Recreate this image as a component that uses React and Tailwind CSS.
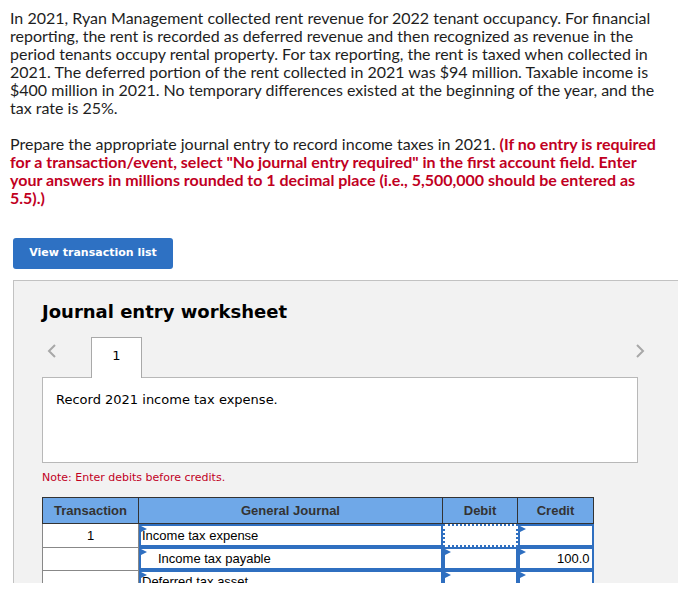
import React from "react";

const verdana = { fontFamily: '"DejaVu Sans", Verdana, sans-serif' };

function Arrow() {
  return (
    <span className="absolute left-0 top-0 w-0 h-0 border-t-[3px] border-b-[3px] border-l-[6px] border-t-transparent border-b-transparent border-l-[#2f6fc0]" />
  );
}

function InputCell({ children, align = "left", indent = false, dotted = false }) {
  return (
    <td className="p-0 align-top">
      <div
        className={`relative h-[23px] bg-white ${
          dotted ? "border-2 border-dotted border-[#2f6fc0]" : "border-2 border-[#2f6fc0]"
        } ${align === "right" ? "text-right pr-[2px]" : ""} ${indent ? "pl-[17px]" : "pl-[1px]"} text-[13px] leading-[20px] text-black`}
      >
        {!dotted && <Arrow />}
        {children}
      </div>
    </td>
  );
}

export default function App() {
  const rows = [
    { tx: "1", account: "Income tax expense", indent: false, debit: "", credit: "", dotted: true },
    { tx: "", account: "Income tax payable", indent: true, debit: "", credit: "100.0" },
    { tx: "", account: "Deferred tax asset", indent: false, debit: "", credit: "" },
  ];

  return (
    <div className="h-[583px] overflow-hidden bg-white">
      <div
        className="pl-[10px] pr-[10px] pt-[9px] text-[16px] leading-[18px] text-[#1e1e1e]"
        style={{ fontFamily: 'Lato, "Open Sans", sans-serif' }}
      >
        <p className="whitespace-nowrap">
          In 2021, Ryan Management collected rent revenue for 2022 tenant occupancy. For financial
          <br />
          reporting, the rent is recorded as deferred revenue and then recognized as revenue in the
          <br />
          period tenants occupy rental property. For tax reporting, the rent is taxed when collected in
          <br />
          2021. The deferred portion of the rent collected in 2021 was $94 million. Taxable income is
          <br />
          $400 million in 2021. No temporary differences existed at the beginning of the year, and the
          <br />
          tax rate is 25%.
        </p>
        <p className="mt-[18px] whitespace-nowrap">
          Prepare the appropriate journal entry to record income taxes in 2021.{" "}
          <b className="text-[#c1001f]">
            (If no entry is required
            <br />
            for a transaction/event, select "No journal entry required" in the first account field. Enter
            <br />
            your answers in millions rounded to 1 decimal place (i.e., 5,500,000 should be entered as
            <br />
            5.5).)
          </b>
        </p>
      </div>

      <div className="pl-[13px] mt-[31px]">
        <button
          className="w-[160px] h-[31px] rounded-[3px] bg-[#2e71c3] text-white text-[11px] font-bold"
          style={verdana}
        >
          View transaction list
        </button>
      </div>

      <div className="ml-[13px] mt-[11px] border-l border-t border-[#c2c2c2] bg-[#f2f2f2] pl-[28px] pr-[40px]" style={verdana}>
        <h2 className="pt-[19px] text-[18px] leading-[24px] font-bold text-black">Journal entry worksheet</h2>

        <div className="relative mt-[12px] flex items-end h-[41px]">
          <svg className="absolute left-[4px] top-[8px]" width="12" height="14" viewBox="0 0 12 14">
            <path d="M9 1 L3 7 L9 13" fill="none" stroke="#a8a8a8" strokeWidth="2" />
          </svg>
          <div className="ml-[49px] w-[51px] h-[41px] -mb-px relative z-10 bg-white border border-b-0 border-[#a9a9a9] text-center text-[13px] leading-[36px] text-black">
            1
          </div>
          <svg className="absolute right-[-8px] top-[8px]" width="12" height="14" viewBox="0 0 12 14">
            <path d="M3 1 L9 7 L3 13" fill="none" stroke="#a8a8a8" strokeWidth="2" />
          </svg>
        </div>

        <div className="w-[596px] h-[86px] bg-white border border-[#b8b8b8] px-[13px] pt-[14px] text-[13px] leading-[16px] text-black">
          Record 2021 income tax expense.
        </div>

        <p className="mt-[8px] text-[11px] leading-[14px] text-[#c1001f]">Note: Enter debits before credits.</p>

        <table
          className="mt-[12px] border-collapse w-[551px] table-fixed"
          style={{ fontFamily: '"Liberation Sans", Arial, sans-serif' }}
        >
          <colgroup>
            <col className="w-[96px]" />
            <col className="w-[304px]" />
            <col className="w-[75px]" />
            <col className="w-[76px]" />
          </colgroup>
          <thead>
            <tr className="bg-[#6fa8e8] text-[13px] font-bold text-[#333]">
              <th className="border border-[#333] p-0 h-[26px]">Transaction</th>
              <th className="border border-[#333] p-0 h-[26px]">General Journal</th>
              <th className="border border-[#333] p-0 h-[26px]">Debit</th>
              <th className="border border-[#333] p-0 h-[26px]">Credit</th>
            </tr>
          </thead>
          <tbody>
            {rows.map((r, i) => (
              <tr key={i}>
                <td className="p-0 h-[23px] border border-[#888] bg-white text-center text-[13px] text-black align-middle">
                  {r.tx}
                </td>
                <InputCell indent={r.indent}>{r.account}</InputCell>
                <InputCell dotted={r.dotted}>{r.debit}</InputCell>
                <InputCell align="right">{r.credit}</InputCell>
              </tr>
            ))}
          </tbody>
        </table>
        <div className="h-[40px]" />
      </div>
    </div>
  );
}
